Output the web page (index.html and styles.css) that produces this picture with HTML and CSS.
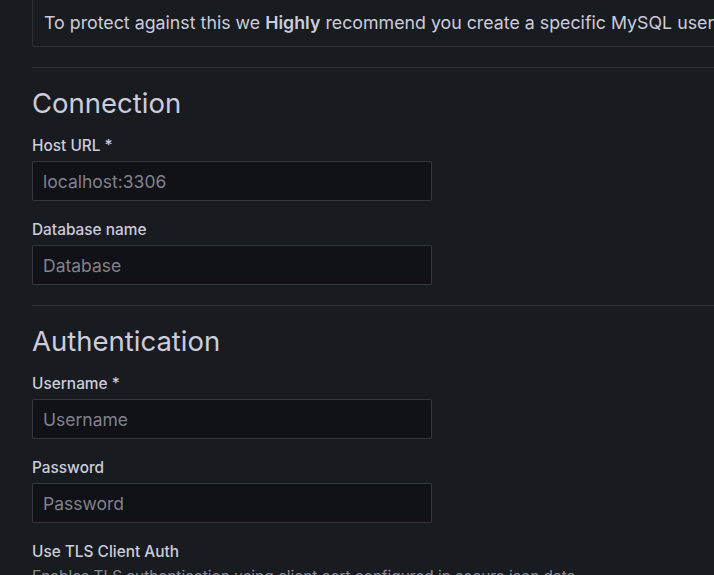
FILE: index.html
```
<!DOCTYPE html>
<html lang="en">
<head>
    <meta charset="UTF-8">
    <meta name="viewport" content="width=device-width, initial-scale=1.0">
    <title>MySQL data source settings</title>
    <link rel="stylesheet" href="styles.css">
</head>
<body>
    <div class="page">
        <div class="alert">
            <div class="alert-title">User Permission</div>
            <p>The database user should only be granted SELECT permissions on the specified database &amp; tables you want to query.</p>
            <p>Grafana does not validate that queries are safe so queries can contain any SQL statement. For example, statements like <code>USE otherdb;</code> and <code>DROP TABLE user;</code><br>would be executed.</p>
            <p class="alert-last">To protect against this we <strong>Highly</strong> recommend you create a specific MySQL user with restricted permissions. Check out the <a href="#">MySQL Data Source Docs</a> for more information.</p>
        </div>

        <hr class="divider">

        <section class="section">
            <h3 class="section-title">Connection</h3>
            <div class="field">
                <label class="field-label" for="host">Host URL *</label>
                <input class="field-input" id="host" type="text" placeholder="localhost:3306">
            </div>
            <div class="field">
                <label class="field-label" for="database">Database name</label>
                <input class="field-input" id="database" type="text" placeholder="Database">
            </div>
        </section>

        <hr class="divider">

        <section class="section">
            <h3 class="section-title">Authentication</h3>
            <div class="field">
                <label class="field-label" for="user">Username *</label>
                <input class="field-input" id="user" type="text" placeholder="Username">
            </div>
            <div class="field">
                <label class="field-label" for="password">Password</label>
                <input class="field-input" id="password" type="password" placeholder="Password">
            </div>
            <div class="field">
                <label class="field-label">Use TLS Client Auth</label>
                <div class="field-desc">Enables TLS authentication using client cert configured in secure json data.</div>
                <div class="switch"></div>
            </div>
        </section>
    </div>
</body>
</html>
```
FILE: styles.css
```
html, body {
    overflow: hidden;
}
body {
    margin: 0;
    background-color: #181b1f;
    color: #ccccdc;
    font-family: Inter, "Noto Sans", sans-serif;
    font-size: 17.5px;
}
.page {
    width: 1100px;
    padding-left: 32px;
    margin-top: -114px; /* page is scrolled down a bit */
}
.alert {
    border: 1px solid rgba(204, 204, 220, 0.12);
    border-radius: 2px;
    padding: 10px 11px;
    margin-bottom: 20px;
    font-size: 17.8px;
    line-height: 27px;
}
.alert p {
    margin: 0;
    white-space: nowrap;
}
.alert .alert-last {
    margin-top: 2px;
}
.alert-title {
    font-weight: 500;
}
.alert strong {
    font-weight: 600;
}
.alert a {
    color: #6e9fff;
    text-decoration: none;
}
.alert code {
    font-family: "DejaVu Sans Mono", monospace;
    font-size: 15px;
}
.divider {
    border: none;
    border-top: 1px solid rgba(204, 204, 220, 0.12);
    margin: 0 0 20px;
}
.section-title {
    font-size: 27.5px;
    line-height: 30px;
    font-weight: 400;
    margin: 0 0 19px;
}
.field {
    margin-bottom: 20px;
}
.field-label {
    display: block;
    font-size: 15.4px;
    line-height: 18px;
    font-weight: 500;
    margin-bottom: 6px;
}
.field-input {
    display: block;
    box-sizing: border-box;
    width: 400px;
    height: 40px;
    padding: 0 10px;
    background-color: #111217;
    border: 1px solid rgba(204, 204, 220, 0.2);
    border-radius: 2px;
    color: #ccccdc;
    font-family: Inter, "Noto Sans", sans-serif;
    font-size: 17.5px;
}
.field-input::placeholder {
    color: rgba(204, 204, 220, 0.61);
}
.field-desc {
    font-size: 15.4px;
    line-height: 19px;
    color: rgba(204, 204, 220, 0.65);
    margin-bottom: 10px;
}
.switch {
    width: 40px;
    height: 20px;
    border-radius: 10px;
    background-color: #2d2f36;
}
```
